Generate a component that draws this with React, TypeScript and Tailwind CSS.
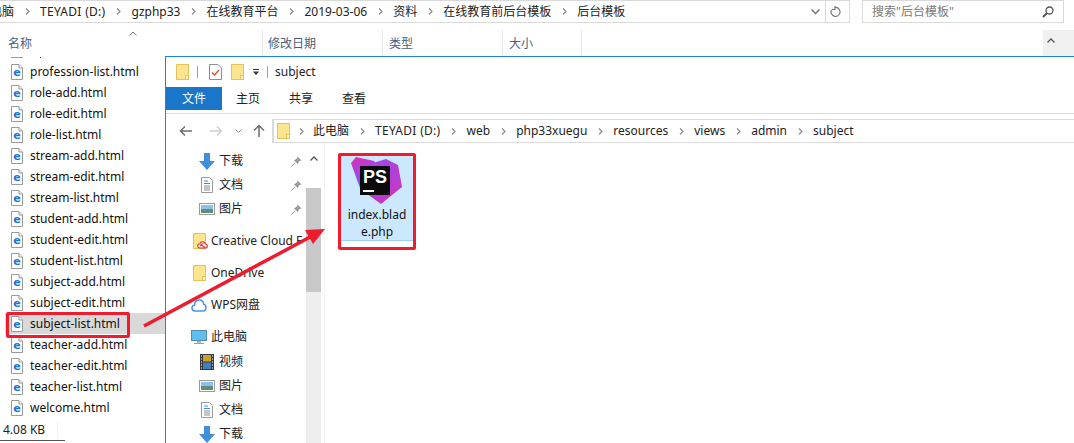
import { ReactNode } from 'react'

const files = [
  'profession-list.html',
  'role-add.html',
  'role-edit.html',
  'role-list.html',
  'stream-add.html',
  'stream-edit.html',
  'stream-list.html',
  'student-add.html',
  'student-edit.html',
  'student-list.html',
  'subject-add.html',
  'subject-edit.html',
  'subject-list.html',
  'teacher-add.html',
  'teacher-edit.html',
  'teacher-list.html',
  'welcome.html',
]

function Folder({ className = '' }: { className?: string }) {
  return (
    <svg width="13" height="16" viewBox="0 0 13 16" className={className}>
      <rect x="0.5" y="0.5" width="12" height="15" fill="#fde58f" stroke="#e6c25a" />
      <rect x="9.5" y="11.5" width="3" height="4" fill="#fff3c4" stroke="#e6c25a" />
    </svg>
  )
}

function HtmlFile() {
  return (
    <svg width="12" height="16" viewBox="0 0 12 16" className="shrink-0">
      <path d="M0.5 0.5H8L11.5 4V15.5H0.5Z" fill="#fff" stroke="#9a9a9a" />
      <path d="M8 0.5V4H11.5" fill="#eee" stroke="#9a9a9a" />
      <text x="6" y="12" textAnchor="middle" fontSize="11" fontWeight="700" fill="#1878d8" fontFamily="DejaVu Sans">
        e
      </text>
    </svg>
  )
}

function Sep() {
  return (
    <svg width="5" height="7" viewBox="0 0 5 7" className="shrink-0">
      <path d="M1 0.5L4 3.5L1 6.5" fill="none" stroke="#8a8a8a" strokeWidth="1.2" />
    </svg>
  )
}

function Down() {
  return (
    <svg width="16" height="17" viewBox="0 0 16 17">
      <path d="M5 0H11V8H16L8 17L0 8H5Z" fill="#3f8fdc" />
    </svg>
  )
}

function Doc() {
  return (
    <svg width="12" height="16" viewBox="0 0 12 16">
      <path d="M0.5 0.5H8.5L11.5 3.5V15.5H0.5Z" fill="#fff" stroke="#9a9a9a" />
      <path d="M3 4H7M3 6.500H9" stroke="#3f8fdc" />
      <path d="M3 9H9M3 11H9M3 13H9" stroke="#8a8a8a" />
    </svg>
  )
}

function Picture() {
  return (
    <svg width="16" height="12" viewBox="0 0 16 12">
      <rect x="0.5" y="0.5" width="15" height="11" fill="#fff" stroke="#9a9a9a" />
      <rect x="2" y="2" width="12" height="4" fill="#8fc0ea" />
      <rect x="2" y="6" width="12" height="4" fill="#5f8f7a" />
    </svg>
  )
}

function Film() {
  return (
    <svg width="14" height="16" viewBox="0 0 14 16">
      <rect width="14" height="16" fill="#3a3a3a" />
      <rect x="3" y="1" width="8" height="6.500" fill="#c9a227" />
      <rect x="3" y="8.500" width="8" height="6.500" fill="#3f7fc0" />
      <path d="M1 2H2M1 5H2M1 8H2M1 11H2M1 14H2M12 2H13M12 5H13M12 8H13M12 11H13M12 14H13" stroke="#fff" />
    </svg>
  )
}

function Monitor() {
  return (
    <svg width="16" height="14" viewBox="0 0 16 14">
      <rect x="0.5" y="0.5" width="15" height="10" fill="#5cc0f0" stroke="#5a8aa8" />
      <rect x="6" y="11" width="4" height="2" fill="#a8bcc8" />
      <rect x="3" y="13" width="10" height="1" fill="#8aa0ae" />
    </svg>
  )
}

function Cloud() {
  return (
    <svg width="16" height="13" viewBox="0 0 16 13">
      <path
        d="M4 12C2 12 1 10.500 1 9C1 7.500 2 6.500 3.500 6.300C3.800 3 6 1 8.500 1C11 1 12.500 3 12.700 5.200C14.300 5.500 15 7 15 8.500C15 10.500 13.700 12 12 12Z"
        fill="#fff"
        stroke="#4d94e8"
        strokeWidth="1.500"
      />
    </svg>
  )
}

function CreativeCloudFolder() {
  return (
    <span className="relative block h-[16px] w-[13px]">
      <Folder />
      <svg width="11" height="8" viewBox="0 0 11 8" className="absolute -right-[2px] bottom-0">
        <path
          d="M3 7C1.500 7 0.700 6 0.700 4.800C0.700 3.600 1.600 2.800 2.800 2.800C3.200 1.500 4.200 0.800 5.500 0.800C7 0.800 8 1.800 8.200 3C9.500 3 10.300 3.800 10.300 5C10.300 6.200 9.500 7 8.300 7ZM3 5C4 5 5 2.500 6.500 2.500M3.500 3.500C5 3.500 6 6 8 6"
          fill="#fff"
          stroke="#e0262b"
          strokeWidth="1.100"
        />
      </svg>
    </span>
  )
}

function Pin() {
  return (
    <svg width="11" height="11" viewBox="0 0 11 11">
      <path d="M6.500 0.500L10.500 4.500L8.500 5L6.500 8L3 4.500L6 2.500Z" fill="#9a9a9a" />
      <path d="M4 7L0.500 10.500" stroke="#9a9a9a" />
    </svg>
  )
}

function PsLogo() {
  return (
    <svg width="52" height="48" viewBox="0 0 52 48" className="-ml-[1px] shrink-0">
      <defs>
        <linearGradient id="ps-left" x1="0" y1="0" x2="0.3" y2="1">
          <stop offset="0" stopColor="#e030ae" />
          <stop offset="0.55" stopColor="#a044e8" />
          <stop offset="1" stopColor="#5560f0" />
        </linearGradient>
        <linearGradient id="ps-right" x1="0" y1="0" x2="0.6" y2="1">
          <stop offset="0" stopColor="#9a4cf0" />
          <stop offset="1" stopColor="#c636c4" />
        </linearGradient>
      </defs>
      <path d="M0 6L5 0L23 4L28 12L22 34L9 31Z" fill="url(#ps-left)" />
      <path d="M35 2L47 8L51 30L30 47L12 34L22 6Z" fill="url(#ps-right)" />
      <rect x="9" y="9" width="30" height="29" fill="#0b0b0b" />
      <text x="12" y="26" fontSize="18" fontWeight="700" fill="#fff" fontFamily="Liberation Sans">
        PS
      </text>
      <rect x="12" y="33" width="11" height="2" fill="#fff" />
    </svg>
  )
}

function NavItem({ icon, label, pin, indent = 'pl-[29px]' }: { icon: ReactNode; label: string; pin?: boolean; indent?: string }) {
  return (
    <div className={`relative flex h-[24px] items-center ${indent}`}>
      <span className="flex w-[24px] shrink-0 justify-center">{icon}</span>
      <span className="whitespace-nowrap">{label}</span>
      {pin && (
        <span className="absolute left-[125px]">
          <Pin />
        </span>
      )}
    </div>
  )
}

function Crumbs({ items }: { items: string[] }) {
  return (
    <div className="flex items-center gap-[10.5px] whitespace-nowrap">
      {items.map((t, i) => (
        <div key={i} className="flex items-center gap-[10.5px]">
          {i > 0 && <Sep />}
          <span className={t.startsWith('TEYADI') ? 'tracking-[0.3px]' : ''}>{t}</span>
        </div>
      ))}
    </div>
  )
}

function ExplorerWindow() {
  return (
    <div className="absolute left-[165px] top-[56px] flex h-[387px] w-[909px] flex-col border-l border-t border-[#1d84d8] bg-white">
      {/* title */}
      <div className="flex h-[30px] items-center pl-[10px]">
        <Folder />
        <span className="ml-[8px] h-[12px] w-px bg-[#a0a0a0]" />
        <svg width="13" height="16" viewBox="0 0 13 16" className="ml-[11px]">
          <path d="M0.5 0.5H9L12.5 4V15.500H0.5Z" fill="#fff" stroke="#8f8f8f" />
          <path d="M3 8.500L5.500 11L10 6" fill="none" stroke="#e0532b" strokeWidth="1.500" />
        </svg>
        <Folder className="ml-[9px]" />
        <svg width="8" height="8" viewBox="0 0 8 8" className="ml-[8px]">
          <path d="M1 1.500H7" stroke="#333" />
          <path d="M1 3.500H7L4 7Z" fill="#333" />
        </svg>
        <span className="ml-[7px] h-[12px] w-px bg-[#a0a0a0]" />
        <span className="ml-[7px] text-[#222]">subject</span>
      </div>
      {/* ribbon tabs */}
      <div className="flex h-[23px]">
        <div className="flex w-[56px] items-center justify-center bg-[#1a76c9] pt-px text-white">文件</div>
        <div className="ml-[14px] flex items-center gap-[29px] pt-px text-[#222]">
          <span>主页</span>
          <span>共享</span>
          <span>查看</span>
        </div>
      </div>
      <div className="mt-[3px] h-px bg-[#dcdcdc]" />
      {/* nav bar */}
      <div className="mt-[5px] flex h-[24px] items-center pl-[13px]">
        <svg width="14" height="12" viewBox="0 0 14 12">
          <path d="M13 6H2M6 1.500L1.500 6L6 10.500" fill="none" stroke="#6e6e6e" strokeWidth="1.500" />
        </svg>
        <svg width="14" height="12" viewBox="0 0 14 12" className="ml-[16px]">
          <path d="M1 6H12M8 1.500L12.500 6L8 10.500" fill="none" stroke="#cfcfcf" strokeWidth="1.500" />
        </svg>
        <svg width="7" height="5" viewBox="0 0 7 5" className="ml-[12px]">
          <path d="M0.500 0.500L3.500 3.500L6.500 0.500" fill="none" stroke="#8a8a8a" />
        </svg>
        <svg width="12" height="14" viewBox="0 0 12 14" className="ml-[11px]">
          <path d="M6 13V2M1 6.500L6 1.500L11 6.500" fill="none" stroke="#6e6e6e" strokeWidth="1.500" />
        </svg>
        <div className="ml-[7px] flex h-[24px] flex-1 items-center gap-[9px] border-y border-l-2 border-[#d9d9d9] pl-[3px] text-[#222]">
          <Folder />
          <Sep />
          <Crumbs items={['此电脑', 'TEYADI (D:)', 'web', 'php33xuegu', 'resources', 'views', 'admin', 'subject']} />
        </div>
      </div>
      {/* body */}
      <div className="flex min-h-0 flex-1">
        <div className="w-[140px] shrink-0 overflow-hidden text-[#222]">
          <div className="pt-[6px]">
            <NavItem icon={<Down />} label="下载" pin />
            <NavItem icon={<Doc />} label="文档" pin />
            <NavItem icon={<Picture />} label="图片" pin />
          </div>
          <div className="mt-[8px]">
            <NavItem indent="pl-[21px]" icon={<CreativeCloudFolder />} label="Creative Cloud F" />
          </div>
          <div className="mt-[8px]">
            <NavItem indent="pl-[21px]" icon={<Folder />} label="OneDrive" />
          </div>
          <div className="mt-[8px]">
            <NavItem indent="pl-[21px]" icon={<Cloud />} label="WPS网盘" />
          </div>
          <div className="mt-[8px]">
            <NavItem indent="pl-[21px]" icon={<Monitor />} label="此电脑" />
          </div>
          <div className="mt-[1px]">
            <NavItem icon={<Film />} label="视频" />
            <NavItem icon={<Picture />} label="图片" />
            <NavItem icon={<Doc />} label="文档" />
            <NavItem icon={<Down />} label="下载" />
          </div>
        </div>
        {/* nav scrollbar */}
        <div className="flex w-[15px] shrink-0 flex-col bg-[#eeeeee]">
          <div className="flex h-[45px] justify-center bg-white pt-[13px]">
            <svg width="8" height="5" viewBox="0 0 8 5">
              <path d="M0.500 4.500L4 1L7.500 4.500" fill="none" stroke="#555" strokeWidth="1.300" />
            </svg>
          </div>
          <div className="h-[104px] bg-[#c8c8c8]" />
        </div>
        <div className="ml-[3px] w-px shrink-0 bg-[#f2f2f2]" />
        {/* selected file */}
        <div className="ml-[13px] mt-[10px]">
          <div className="flex h-[97px] w-[78px] flex-col rounded-[2px] border-[3px] border-[#ee1c2e] bg-white">
            <div className="flex h-[85px] flex-col items-center overflow-hidden border-b border-[#99d1ff] bg-[#cce8ff] pt-[1px]">
              <PsLogo />
              <div className="mt-[1px] w-[62px] break-all text-center leading-[17px] text-[#111]">index.blade.php</div>
            </div>
          </div>
        </div>
      </div>
    </div>
  )
}

export default function App() {
  return (
    <div className="relative flex h-[443px] w-[1074px] flex-col overflow-hidden bg-white font-['Noto_Sans','Noto_Sans_CJK_SC',sans-serif] text-[12px] text-[#222]">
      {/* address row */}
      <div className="flex h-[24px] shrink-0">
        <div className="flex h-[23px] w-[850px] items-center border-y border-r border-[#d9d9d9] pr-[4px]">
          <div className="flex flex-1 items-center overflow-hidden">
            <div className="-ml-[10px]">
              <Crumbs items={['电脑', 'TEYADI (D:)', 'gzphp33', '在线教育平台', '2019-03-06', '资料', '在线教育前后台模板', '后台模板']} />
            </div>
          </div>
          <svg width="9" height="6" viewBox="0 0 9 6" className="mr-[5px]">
            <path d="M0.500 0.500L4.500 4.500L8.500 0.500" fill="none" stroke="#777" strokeWidth="1.500" />
          </svg>
          <div className="flex h-full w-[20px] items-center justify-center border-l border-[#d9d9d9]">
            <svg width="11" height="12" viewBox="0 0 11 12">
              <path d="M5 1.500A4.500 4.500 0 1 1 1.500 4M5 0V3.500H2" fill="none" stroke="#777" strokeWidth="1.200" />
            </svg>
          </div>
        </div>
        <div className="ml-[12px] flex h-[23px] w-[202px] items-center justify-between border border-[#d9d9d9] pl-[9px] pr-[9px] text-[#7a7a7a]">
          <span>搜索"后台模板"</span>
          <svg width="12" height="12" viewBox="0 0 12 12">
            <circle cx="7.500" cy="4.500" r="3.500" fill="none" stroke="#555" strokeWidth="1.300" />
            <path d="M5 7L1 11" stroke="#555" strokeWidth="2" />
          </svg>
        </div>
      </div>
      {/* column headers */}
      <div className="mt-[6px] flex h-[26px] shrink-0 text-[#4c607a]">
        <div className="relative w-[263px] border-r border-[#e5e5e5] pl-[8px] pt-[5px]">
          <span>名称</span>
          <svg width="8" height="5" viewBox="0 0 8 5" className="absolute left-[129px] top-[1px]">
            <path d="M0.500 4.500L4 1L7.500 4.500" fill="none" stroke="#777" />
          </svg>
        </div>
        <div className="w-[120px] border-r border-[#e5e5e5] pl-[5px] pt-[5px]">修改日期</div>
        <div className="w-[120px] border-r border-[#e5e5e5] pl-[6px] pt-[5px]">类型</div>
        <div className="w-[79px] border-r border-[#e5e5e5] pl-[6px] pt-[5px]">大小</div>
        <div className="flex-1" />
        <div className="flex w-[31px] justify-start bg-[#f0f0f0] pl-[4px] pt-[8px]">
          <svg width="8" height="5" viewBox="0 0 8 5">
            <path d="M0.500 4.500L4 1L7.500 4.500" fill="none" stroke="#555" strokeWidth="1.300" />
          </svg>
        </div>
      </div>
      {/* file list */}
      <div className="flex w-[165px] flex-1 flex-col overflow-hidden pl-[11px] pt-[1px]">
        <div className="mb-[3px] flex h-px shrink-0 gap-[17px]">
          <span className="w-[12px] bg-[#9a9a9a]" />
          <span className="w-px bg-[#333]" />
        </div>
        {files.map((f) => (
          <div
            key={f}
            className={`flex h-[21px] shrink-0 items-center gap-[7px] ${f === 'subject-list.html' ? '-ml-[6px] bg-[#d9d9d9] pl-[6px]' : ''}`}
          >
            <HtmlFile />
            <span className="text-[#111]">{f}</span>
          </div>
        ))}
        <div className="-ml-[8px] mt-[3px] flex h-[18px] items-center">
          <span className="w-[54px]">4.08 KB</span>
          <span className="h-[16px] w-px bg-[#f0f0f0]" />
        </div>
        <div className="-ml-[11px] mt-[1px] h-px w-[65px] bg-[#555]" />
      </div>

      <ExplorerWindow />

      {/* annotations */}
      <div className="absolute left-[6px] top-[312px] h-[26px] w-[124px] rounded-[2px] border-[3px] border-[#ee1c2e]" />
      <svg width="1074" height="443" viewBox="0 0 1074 443" className="pointer-events-none absolute left-0 top-0">
        <path d="M144 326L312 236" stroke="#ee1c2e" strokeWidth="3.500" />
        <path d="M325 229L305 230L313 244Z" fill="#ee1c2e" />
      </svg>
    </div>
  )
}
